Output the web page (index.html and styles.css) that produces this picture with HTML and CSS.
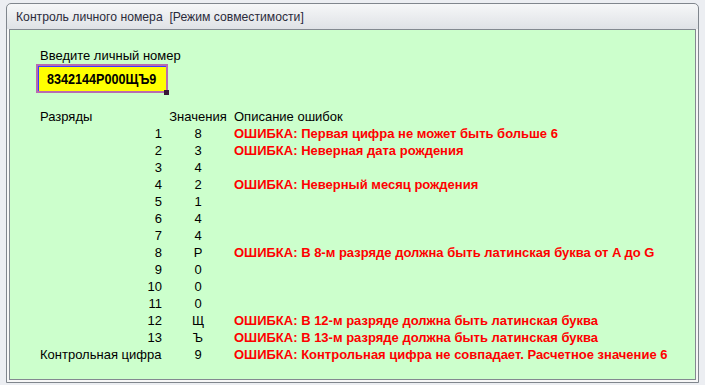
FILE: index.html
```html
<!DOCTYPE html>
<html lang="ru">
<head>
    <meta charset="UTF-8">
    <title>Контроль личного номера</title>
    <link rel="stylesheet" href="styles.css">
</head>
<body>
    <div class="window">
        <div class="window-title">Контроль личного номера&nbsp; [Режим совместимости]</div>
        <div class="panel">
            <div class="prompt">Введите личный номер</div>
            <div class="number-box">
                <span class="number-value">8342144P000ЩЪ9</span>
                <span class="grip"></span>
            </div>

            <div class="digits">
                <div class="col-pos head">Разряды</div>
                <div class="col-val">Значения</div>
                <div class="col-msg">Описание ошибок</div>

                <div class="col-pos">1</div><div class="col-val">8</div><div class="col-msg err">ОШИБКА: Первая цифра не может быть больше 6</div>
                <div class="col-pos">2</div><div class="col-val">3</div><div class="col-msg err">ОШИБКА: Неверная дата рождения</div>
                <div class="col-pos">3</div><div class="col-val">4</div><div class="col-msg"></div>
                <div class="col-pos">4</div><div class="col-val">2</div><div class="col-msg err">ОШИБКА: Неверный месяц рождения</div>
                <div class="col-pos">5</div><div class="col-val">1</div><div class="col-msg"></div>
                <div class="col-pos">6</div><div class="col-val">4</div><div class="col-msg"></div>
                <div class="col-pos">7</div><div class="col-val">4</div><div class="col-msg"></div>
                <div class="col-pos">8</div><div class="col-val">P</div><div class="col-msg err">ОШИБКА: В 8-м разряде должна быть латинская буква от A до G</div>
                <div class="col-pos">9</div><div class="col-val">0</div><div class="col-msg"></div>
                <div class="col-pos">10</div><div class="col-val">0</div><div class="col-msg"></div>
                <div class="col-pos">11</div><div class="col-val">0</div><div class="col-msg"></div>
                <div class="col-pos">12</div><div class="col-val">Щ</div><div class="col-msg err">ОШИБКА: В 12-м разряде должна быть латинская буква</div>
                <div class="col-pos">13</div><div class="col-val">Ъ</div><div class="col-msg err">ОШИБКА: В 13-м разряде должна быть латинская буква</div>
                <div class="col-pos head">Контрольная цифра</div><div class="col-val">9</div><div class="col-msg err">ОШИБКА: Контрольная цифра не совпадает. Расчетное значение 6</div>
            </div>
        </div>
    </div>
</body>
</html>
```

FILE: styles.css
```css
body {
    margin: 0;
    padding: 3px 6px 0 6px;
    background: #eceef2;
    font-family: "Liberation Sans", Arial, sans-serif;
    font-size: 13px;
    color: #000;
}
.window {
    width: 687px;
    height: 376px;
    border: 1px solid #80868d;
    border-radius: 5px 5px 0 0;
    background: linear-gradient(#f6f7f8, #dfe2e6 25px, #f7f7f7 25px);
    display: flex;
    flex-direction: column;
    padding: 0 2px 2px 2px;
}
.window-title {
    height: 25px;
    line-height: 26px;
    padding-left: 7px;
    font-family: "Liberation Sans", sans-serif;
    font-size: 12.2px;
    color: #2b2b3b;
}
.panel {
    flex: 1;
    border: 1px solid #838990;
    background: #ccffcc;
    padding: 18px 0 0 30px;
}
.prompt {
    line-height: 15px;
    font-size: 13px;
}
.number-box {
    position: relative;
    width: 128px;
    height: 25px;
    margin: 1px 0 0 -4px;
    border: 2px solid #b86cb0;
    box-shadow: inset 1px 1px 0 #3b3bff;
    background: #ffff00;
    display: flex;
    align-items: center;
    justify-content: center;
}
.number-value {
    font-weight: bold;
    font-size: 14px;
    padding-top: 1px;
    transform: scaleX(0.9);
}
.grip {
    position: absolute;
    right: -3px;
    bottom: -4px;
    width: 5px;
    height: 5px;
    background: #3a1838;
}
.digits {
    display: grid;
    grid-template-columns: 122px 64px 1fr;
    column-gap: 4px;
    grid-auto-rows: 17px;
    line-height: 17px;
    margin-top: 15px;
    white-space: nowrap;
}
.col-pos {
    text-align: right;
}
.col-pos.head {
    text-align: left;
}
.col-val {
    text-align: center;
}
.err {
    color: #ff0000;
    font-weight: bold;
}
```
